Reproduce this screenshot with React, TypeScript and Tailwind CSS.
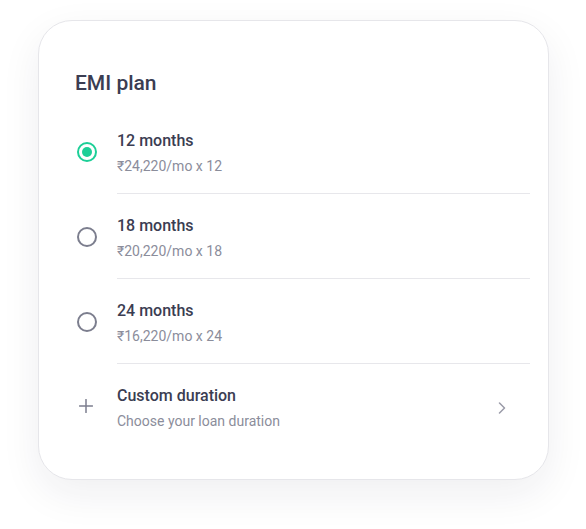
import React from "react";

const plans = [
  { title: "12 months", sub: "₹24,220/mo x 12", selected: true },
  { title: "18 months", sub: "₹20,220/mo x 18", selected: false },
  { title: "24 months", sub: "₹16,220/mo x 24", selected: false },
];

function Radio({ selected }: { selected: boolean }) {
  if (selected) {
    return (
      <div className="w-[20px] h-[20px] rounded-full border-2 border-[#1ccf97] flex items-center justify-center">
        <div className="w-[10px] h-[10px] rounded-full bg-[#1ccf97]" />
      </div>
    );
  }
  return <div className="w-[20px] h-[20px] rounded-full border-2 border-[#7c7e8e]" />;
}

export default function App() {
  return (
    <div className="min-h-[529px] bg-white pt-[20px] pl-[38px]" style={{ fontFamily: "Roboto, 'Noto Sans', sans-serif" }}>
      <div className="w-[511px] h-[460px] rounded-[34px] border border-[#e6e6ea] bg-white shadow-[0_14px_40px_rgba(30,30,60,0.07)] pt-[47px] pl-[36px] pr-[18px]">
        <h1 className="text-[21px] leading-[28px] font-medium text-[#3b3d52] pt-[1px]">EMI plan</h1>
        <div className="mt-[12px]">
          {plans.map((p) => (
            <div key={p.title} className="flex">
              <div className="w-[42px] pl-[2px] flex items-center">
                <Radio selected={p.selected} />
              </div>
              <div className="flex-1 border-b border-[#e7e7eb] pt-[20px] pb-[17px] flex flex-col">
                <div className="text-[16px] leading-[24px] font-medium text-[#3b3d52]">{p.title}</div>
                <div className="mt-[3px] text-[14px] leading-[20px] text-[#8b8d9b]">{p.sub}</div>
              </div>
            </div>
          ))}
          <div className="flex">
            <div className="w-[42px] pl-[4px] flex items-center">
              <svg width="14" height="14" viewBox="0 0 14 14" fill="none">
                <path d="M7 0.5V13.5M0.5 7H13.5" stroke="#7c7e8e" strokeWidth="1.5" strokeLinecap="round" />
              </svg>
            </div>
            <div className="flex-1 pt-[20px] pb-[17px] flex items-center justify-between">
              <div className="flex flex-col">
                <div className="text-[16px] leading-[24px] font-medium text-[#3b3d52]">Custom duration</div>
                <div className="mt-[3px] text-[14px] leading-[20px] text-[#8b8d9b]">Choose your loan duration</div>
              </div>
              <svg className="mr-[24px]" width="8" height="12" viewBox="0 0 8 12" fill="none">
                <path d="M1.5 1L6.5 6L1.5 11" stroke="#9a9ba8" strokeWidth="1.5" strokeLinecap="round" strokeLinejoin="round" />
              </svg>
            </div>
          </div>
        </div>
      </div>
    </div>
  );
}
